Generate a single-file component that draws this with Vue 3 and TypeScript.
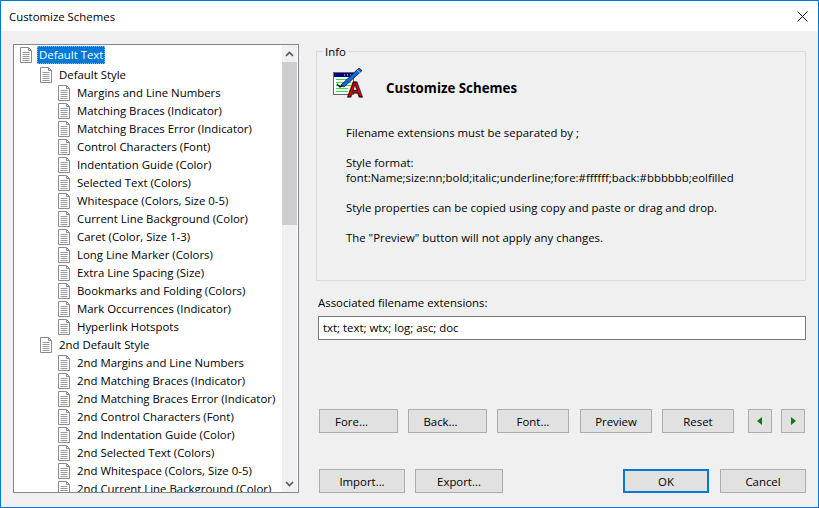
<script setup lang="ts">
const tail = ['Margins and Line Numbers', 'Matching Braces (Indicator)', 'Matching Braces Error (Indicator)', 'Control Characters (Font)', 'Indentation Guide (Color)', 'Selected Text (Colors)', 'Whitespace (Colors, Size 0-5)', 'Current Line Background (Color)']
const first = [...tail, 'Caret (Color, Size 1-3)', 'Long Line Marker (Colors)', 'Extra Line Spacing (Size)', 'Bookmarks and Folding (Colors)', 'Mark Occurrences (Indicator)', 'Hyperlink Hotspots']
const second = tail.map((t) => '2nd ' + t)
const infoLines = ['Filename extensions must be separated by ;', '', 'Style format:', 'font:Name;size:nn;bold;italic;underline;fore:#ffffff;back:#bbbbbb;eolfilled', '', 'Style properties can be copied using copy and paste or drag and drop.', '', 'The "Preview" button will not apply any changes.']
</script>

<template>
  <div class="dialog">
    <header class="titlebar">
      <span>Customize Schemes</span>
      <svg class="close" width="11" height="11" viewBox="0 0 11 11"><path d="M.5.5l10 10M10.5.5l-10 10" stroke="#111" fill="none" /></svg>
    </header>
    <main class="body">
      <section class="tree">
        <div class="tree-list">
          <div class="row root">
            <svg class="doc" width="12" height="16" viewBox="0 0 12 16"><path d="M.5.5h8l3 3v12H.5zM8.5.5v3h3" fill="#fff" stroke="#8a8a8a" /><path d="M2.5 5.5h7M2.5 7.5h7M2.5 9.5h7M2.5 11.5h7M2.5 13.5h7" stroke="#9a9a9a" /></svg>
            <span class="selected">Default Text</span>
          </div>
          <div class="row style">
            <svg class="doc" width="12" height="16" viewBox="0 0 12 16"><path d="M.5.5h8l3 3v12H.5zM8.5.5v3h3" fill="#fff" stroke="#8a8a8a" /><path d="M2.5 5.5h7M2.5 7.5h7M2.5 9.5h7M2.5 11.5h7M2.5 13.5h7" stroke="#9a9a9a" /></svg>
            <span>Default Style</span>
          </div>
          <div v-for="t in first" :key="t" class="row leaf">
            <svg class="doc" width="12" height="16" viewBox="0 0 12 16"><path d="M.5.5h8l3 3v12H.5zM8.5.5v3h3" fill="#fff" stroke="#8a8a8a" /><path d="M2.5 5.5h7M2.5 7.5h7M2.5 9.5h7M2.5 11.5h7M2.5 13.5h7" stroke="#9a9a9a" /></svg>
            <span>{{ t }}</span>
          </div>
          <div class="row style">
            <svg class="doc" width="12" height="16" viewBox="0 0 12 16"><path d="M.5.5h8l3 3v12H.5zM8.5.5v3h3" fill="#fff" stroke="#8a8a8a" /><path d="M2.5 5.5h7M2.5 7.5h7M2.5 9.5h7M2.5 11.5h7M2.5 13.5h7" stroke="#9a9a9a" /></svg>
            <span>2nd Default Style</span>
          </div>
          <div v-for="t in second" :key="t" class="row leaf">
            <svg class="doc" width="12" height="16" viewBox="0 0 12 16"><path d="M.5.5h8l3 3v12H.5zM8.5.5v3h3" fill="#fff" stroke="#8a8a8a" /><path d="M2.5 5.5h7M2.5 7.5h7M2.5 9.5h7M2.5 11.5h7M2.5 13.5h7" stroke="#9a9a9a" /></svg>
            <span>{{ t }}</span>
          </div>
        </div>
        <div class="scrollbar">
          <div class="sb-btn"><svg width="9" height="6" viewBox="0 0 9 6"><path d="M1 5l3.5-3.5L8 5" stroke="#555" stroke-width="1.6" fill="none" /></svg></div>
          <div class="thumb"></div>
          <div class="sb-space"></div>
          <div class="sb-btn"><svg width="9" height="6" viewBox="0 0 9 6"><path d="M1 1l3.5 3.5L8 1" stroke="#555" stroke-width="1.6" fill="none" /></svg></div>
        </div>
      </section>
      <section class="right">
        <fieldset class="info">
          <legend>Info</legend>
          <div class="info-head">
            <svg class="logo" width="32" height="32" viewBox="0 0 32 32">
              <rect x=".5" y="5.5" width="20" height="22" fill="#fff" stroke="#666" />
              <rect x="1" y="6" width="19" height="4" fill="#000080" />
              <path d="M11 8h1M14 8h1M17 8h1" stroke="#fff" />
              <path d="M3 12.500h15M3 15.500h15M3 18.500h15M3 21.500h12M3 24.500h12" stroke="#2ee04a" />
              <path d="M4 17l3 3 6-3" stroke="#000" stroke-width="1.4" fill="none" />
              <path d="M8 18L26 1l3 2.500L11 20z" fill="#1266e0" stroke="#000" stroke-width=".7" />
              <path d="M24 3l3 2.500" stroke="#8fd0ff" />
              <text x="14" y="30" class="logo-a">A</text>
            </svg>
            <span>Customize Schemes</span>
          </div>
          <p v-for="(l, i) in infoLines" :key="i" class="line">{{ l }}</p>
        </fieldset>
        <label class="assoc">Associated filename extensions:</label>
        <div class="input">txt; text; wtx; log; asc; doc</div>
        <div class="btn-row mid">
          <button class="b79 off">Fore...</button>
          <button class="b79 off">Back...</button>
          <button class="b72">Font...</button>
          <button class="b72 preview">Preview</button>
          <button class="b72">Reset</button>
          <button class="arrow first"><svg width="6" height="8" viewBox="0 0 6 8"><path d="M5 0v8L0 4z" fill="#0a7a0a" /></svg></button>
          <button class="arrow"><svg width="6" height="8" viewBox="0 0 6 8"><path d="M1 0v8l5-4z" fill="#0a7a0a" /></svg></button>
        </div>
        <div class="btn-row bottom">
          <button class="b86">Import...</button>
          <button class="b88">Export...</button>
          <span class="grow"></span>
          <button class="b86 ok">OK</button>
          <button class="b86">Cancel</button>
        </div>
      </section>
    </main>
  </div>
</template>

<style>
html, body { margin: 0; padding: 0; }
</style>

<style scoped>
.dialog {
  width: 819px; height: 508px; box-sizing: border-box;
  border: 1px solid #0078d7; background: #f0f0f0;
  font: 11.4px "Open Sans", "Noto Sans", sans-serif; color: #000;
  display: flex; flex-direction: column; overflow: hidden;
}
.titlebar {
  height: 30px; flex: none; background: #fff; display: flex; align-items: center;
  justify-content: space-between; padding: 0 10px 0 8px;
}
.close { display: block; }
.body { flex: 1; display: flex; padding: 13px 12px 13px 12px; min-height: 0; }
.tree {
  width: 286px; height: 449px; box-sizing: border-box; flex: none;
  border: 1px solid #828790; background: #fff; display: flex;
}
.tree-list { flex: 1; overflow: hidden; padding-top: 1px; min-width: 0; }
.row { height: 18px; display: flex; align-items: center; white-space: nowrap; }
.row span { line-height: 18px; }
.doc { flex: none; }
.root { padding-left: 6px; margin-bottom: 2px; }
.root .doc { margin-right: 5px; }
.selected { background: #0078d7; color: #fff; padding: 0 2px; outline: 1px dotted #7fb9e8; outline-offset: -1px; }
.style { padding-left: 26px; }
.style .doc { margin-right: 7px; }
.leaf { padding-left: 44px; }
.leaf .doc { margin-right: 7px; }
.scrollbar { width: 15px; flex: none; background: #f0f0f0; display: flex; flex-direction: column; margin-right: 1px; }
.sb-btn { height: 17px; display: flex; align-items: center; justify-content: center; flex: none; }
.thumb { height: 163px; background: #cdcdcd; flex: none; }
.sb-space { flex: 1; }
.right { flex: 1; margin-left: 17px; display: flex; flex-direction: column; min-width: 0; }
.info {
  margin: 0; padding: 0; height: 237px; box-sizing: border-box; flex: none;
  border: 1px solid #dcdcdc; min-width: 0;
}
.info legend { padding: 0 2px; margin-left: 6px; line-height: 15px; }
.info-head { display: flex; align-items: center; margin: 0 0 0 16px; height: 58px; }
.info-head span { font-weight: 700; font-size: 13.3px; margin-left: 21px; }
.logo { display: block; align-self: flex-start; margin-top: 8px; }
.logo-a { font: 700 22px "Liberation Sans", sans-serif; fill: #e80000; stroke: #000; stroke-width: .8px; }
.line { margin: 0 0 0 29px; height: 15px; line-height: 15px; white-space: nowrap; }
.info-head + .line { margin-top: 8px; }
.assoc { margin: 14px 0 0 2px; line-height: 16px; }
.input {
  margin: 5px 0 0 2px; height: 24px; box-sizing: border-box; border: 1px solid #7a7a7a; background: #fff;
  line-height: 22px; padding-left: 4px; width: 488px;
}
.btn-row { display: flex; flex: none; gap: 10px; }
.mid { margin: 69px 0 0 3px; }
.bottom { margin: 36px 0 0 3px; }
.grow { flex: 1; }
button {
  height: 24px; box-sizing: border-box; border: 1px solid #adadad; background: #e1e1e1;
  font: inherit; color: #000; padding: 0; display: flex; align-items: center; justify-content: center; flex: none;
}
.b79 { width: 79px; }
.b72 { width: 72px; }
.b86 { width: 86px; }
.b88 { width: 88px; }
.off { padding-right: 14px; }
.preview { margin-left: 1px; }
.arrow { width: 24px; margin-left: -1px; }
.arrow.first { margin-left: 4px; }
.ok { border: 2px solid #0078d7; margin-right: 1px; }
</style>
